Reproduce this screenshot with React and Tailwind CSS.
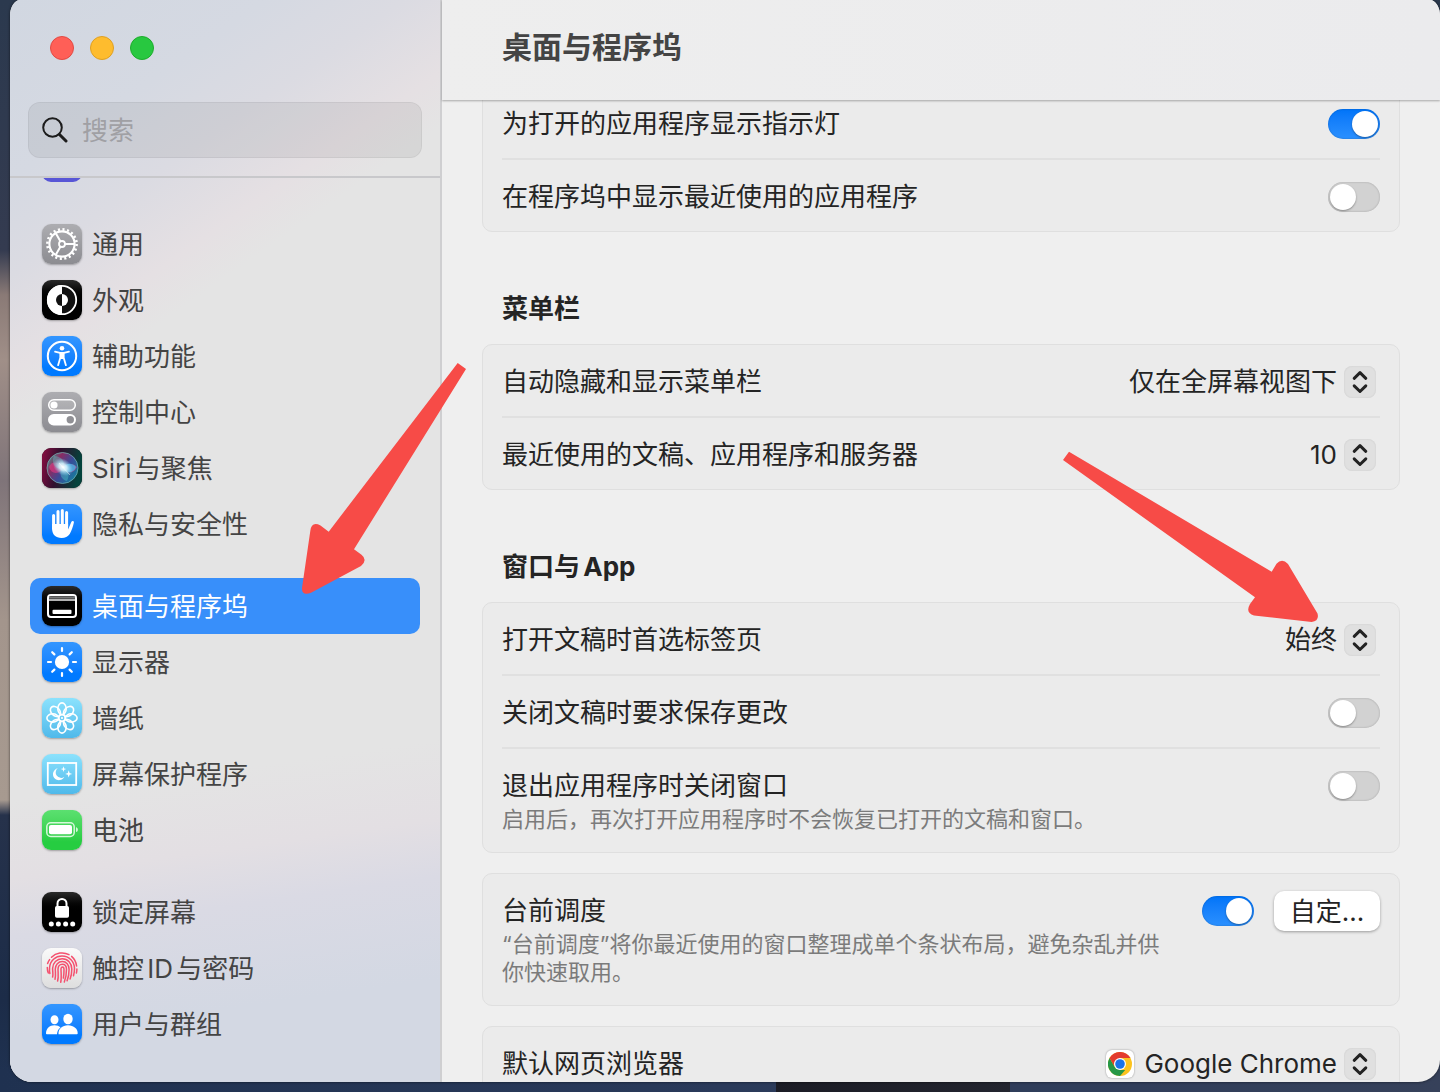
import React, { useState } from 'react';

const GearIcon = () => (
    <svg viewBox="0 0 40 40" className="h-10 w-10" fill="none" stroke="#fff">
        <circle cx="20" cy="20" r="14.6" strokeWidth="2.6" strokeDasharray="2.1 2.488" />
        <circle cx="20" cy="20" r="12.6" strokeWidth="2.1" />
        <circle cx="20" cy="20" r="3" strokeWidth="1.8" />
        <path d="M23 20h9.5M18.5 17.4 13.8 9.2M18.5 22.6l-4.7 8.2" strokeWidth="2" />
    </svg>
);

const AppearanceIcon = () => (
    <svg viewBox="0 0 40 40" className="h-10 w-10">
        <circle cx="20" cy="20" r="14.2" fill="#111" stroke="#fff" strokeWidth="1.8" />
        <path d="M20 5a15 15 0 0 0 0 30z" fill="#fff" />
        <path d="M20 14a6 6 0 0 0 0 12z" fill="#111" />
        <path d="M20 14a6 6 0 0 1 0 12z" fill="#fff" />
    </svg>
);

const AccessibilityIcon = () => (
    <svg viewBox="0 0 40 40" className="h-10 w-10" fill="none" stroke="#fff" strokeLinecap="round" strokeLinejoin="round">
        <circle cx="20" cy="20" r="14.2" strokeWidth="2" />
        <circle cx="20" cy="12.3" r="2.3" fill="#fff" stroke="none" />
        <path d="M13 15.6l5 1.2h4l5-1.2" strokeWidth="1.7" />
        <path d="M18.3 16.8h3.4v5l2.2 7.4M18.3 16.8v5l-2.2 7.4M19.5 17v5h1v-5" strokeWidth="1.8" />
    </svg>
);

const ControlIcon = () => (
    <svg viewBox="0 0 40 40" className="h-10 w-10">
        <rect x="6.7" y="7.7" width="26.6" height="10.6" rx="5.3" fill="#ffffff22" stroke="#fff" strokeWidth="1.5" />
        <circle cx="12" cy="13" r="3.6" fill="#fff" />
        <rect x="6" y="22" width="28" height="11.4" rx="5.7" fill="#fff" />
        <circle cx="28.3" cy="27.7" r="3.7" fill="#909095" />
    </svg>
);

const SiriIcon = () => (
    <svg viewBox="0 0 40 40" className="h-10 w-10">
        <defs>
            <linearGradient id="siriBg" x1="0" x2="1" y1="0" y2="0.2">
                <stop offset="0" stopColor="#8c0c42" />
                <stop offset="0.45" stopColor="#32102f" />
                <stop offset="1" stopColor="#04433c" />
            </linearGradient>
            <linearGradient id="siriOrb" x1="0" x2="1" y1="0.1" y2="0.8">
                <stop offset="0" stopColor="#3c9f91" />
                <stop offset="0.3" stopColor="#8a2b62" />
                <stop offset="0.6" stopColor="#394b98" />
                <stop offset="1" stopColor="#12829d" />
            </linearGradient>
            <radialGradient id="siriGlow">
                <stop offset="0" stopColor="#fff" />
                <stop offset="0.4" stopColor="#d9f7ff" stopOpacity="0.85" />
                <stop offset="1" stopColor="#7fd8f5" stopOpacity="0" />
            </radialGradient>
        </defs>
        <rect width="40" height="40" rx="9" fill="url(#siriBg)" />
        <circle cx="20.5" cy="20" r="15.5" fill="url(#siriOrb)" stroke="#76b6b7" strokeOpacity="0.7" />
        <path d="M7 19c3-8 11-4 14 0 4 6 10 8 14 0-5-5-10-3-14 2-5 6-12 5-14-2z" fill="#e33b83" fillOpacity="0.6" />
        <path d="M20 20c4-5 10-6 14-1-2 6-9 7-14 1z" fill="#42b7e8" fillOpacity="0.8" />
        <path d="M12 8c7 0 12 5 9 12 6 2 7 7 4 13-5-1-8-6-6-12-7-1-10-7-7-13z" fill="#56dfd0" fillOpacity="0.35" />
        <ellipse cx="21" cy="19" rx="11" ry="8" fill="url(#siriGlow)" transform="rotate(35 21 19)" />
        <path d="M17 15l11 12" stroke="#fff" strokeOpacity="0.5" />
    </svg>
);

const HandIcon = () => (
    <svg viewBox="0 0 40 40" className="h-10 w-10" fill="none" stroke="#fff" strokeLinecap="round">
        <path d="M11.6 11.6v13M16 7.6v14M20.3 6.6v14M24.6 8.6v14" strokeWidth="3" />
        <path d="M10.1 20h16v5.4l3.2-7.5c.6-1.4 3-1.2 2.6.7-1 4.3-2.4 8.4-4.2 11.4C25.8 32.9 23.2 34 19.6 34c-6 0-9.500-3.500-9.500-9.500z" fill="#fff" stroke="none" />
    </svg>
);

const DockIcon = () => (
    <svg viewBox="0 0 40 40" className="h-10 w-10">
        <rect x="6" y="9" width="28" height="22" rx="3" fill="none" stroke="#fff" strokeWidth="2" />
        <path d="M7 11.5h26" stroke="#777" strokeWidth="2.4" />
        <path d="M6 14h28" stroke="#fff" strokeWidth="1.4" />
        <rect x="10.5" y="23.7" width="19" height="4.3" rx="1" fill="#fff" />
    </svg>
);

const SunIcon = () => (
    <svg viewBox="0 0 40 40" className="h-10 w-10" stroke="#fff" strokeWidth="2.2" strokeLinecap="round">
        <circle cx="20" cy="20" r="7.1" fill="#fff" stroke="none" />
        <path d="M20 6v3M20 31v3M6 20h3M31 20h3M10.2 10.2l2.2 2.2M27.600 27.600l2.200 2.200M10.200 29.800l2.200-2.200M27.600 12.400l2.200-2.200" />
    </svg>
);

const FlowerIcon = () => (
    <svg viewBox="0 0 40 40" className="h-10 w-10" fill="none" stroke="#fff" strokeWidth="1.6">
        {[0, 45, 90, 135, 180, 225, 270, 315].map((a) => (
            <ellipse key={a} cx="20" cy="10.700" rx="4.200" ry="5.800" transform={`rotate(${a} 20 20)`} />
        ))}
        <circle cx="20" cy="20" r="3" strokeWidth="1.200" />
        <circle cx="20" cy="20" r="1.100" fill="#fff" stroke="none" />
    </svg>
);

const SaverIcon = () => (
    <svg viewBox="0 0 40 40" className="h-10 w-10" fill="#fff">
        <rect x="5.800" y="9" width="28.400" height="22" fill="none" stroke="#fff" strokeWidth="1.800" />
        <path d="M15.700 14.300a6 6 0 1 0 6.700 8.400 5.200 5.200 0 0 1-6.700-8.400z" />
        <path d="M21.500 12.300l.7 2.100 2.100.7-2.100.7-.7 2.100-.7-2.100-2.100-.7 2.100-.7zM26.700 16.200l.9 2.800 2.600.9-2.600.9-.9 2.800-.9-2.800-2.600-.9 2.600-.9z" />
    </svg>
);

const BatteryIcon = () => (
    <svg viewBox="0 0 40 40" className="h-10 w-10">
        <rect x="4.800" y="12.800" width="27.400" height="13.600" rx="4" fill="none" stroke="#d5f8da" strokeWidth="1.500" />
        <rect x="7" y="15" width="23" height="9.200" rx="2" fill="#fff" />
        <path d="M34 17.200c2.500.6 2.500 4.200 0 4.800z" fill="#d5f8da" />
    </svg>
);

const LockIcon = () => (
    <svg viewBox="0 0 40 40" className="h-10 w-10" fill="#fff">
        <path d="M15.500 15v-3.600a4.500 4.500 0 0 1 9 0V15" fill="none" stroke="#fff" strokeWidth="2" />
        <rect x="13" y="14" width="14" height="11.800" rx="1.800" />
        <circle cx="9.300" cy="32" r="2.500" />
        <circle cx="16.400" cy="32" r="2.500" />
        <circle cx="23.600" cy="32" r="2.500" />
        <circle cx="30.700" cy="32" r="2.500" />
    </svg>
);

const TouchIcon = () => (
    <svg viewBox="0 0 40 40" className="h-10 w-10" fill="none" stroke="#f4506e" strokeWidth="1.500" strokeLinecap="round">
        <path d="M9.500 9.300a15 15 0 0 1 17.500-2.700M29.600 8.400a15 15 0 0 1 5 9.600M5.600 15.500a15 15 0 0 1 2-3.900" />
        <path d="M5.300 19.500c0 2.200.4 4 1 5.500M7.900 25.500c-.6-2-.5-3.500-.3-6C8 12.800 13.500 8 20 8c7.300 0 12.500 5.700 12.500 12.500 0 2.500-.3 5-1 7.300M34.900 21c0 1.500-.2 2.800-.5 4" />
        <path d="M10.600 29c.8-2.500 0-5 0-8.500 0-5.600 4.300-9.800 9.600-9.800 5.600 0 9.600 4.500 9.600 10.300 0 3.900-.5 7-1.700 10" />
        <path d="M13 31.300c1-3.300.3-7 .3-10.300 0-4.300 3-7.500 7-7.500s6.800 3.300 6.800 7.700c0 4.300-.6 8-2 11.600" />
        <path d="M15.600 33c1.200-4 .4-8 .4-11.800 0-2.900 1.800-5 4.300-5s4.200 2.100 4.200 5c0 4.600-.6 8.700-2.200 12.800" />
        <path d="M18.700 34.300c.8-3 .6-7.300.3-12.600-.1-1.600.4-2.700 1.500-2.700s1.500 1.100 1.500 2.600c0 3.400-.1 5.800-.6 8.500" />
    </svg>
);

const UsersIcon = () => (
    <svg viewBox="0 0 40 40" className="h-10 w-10" fill="#fff">
        <ellipse cx="12.500" cy="15.700" rx="4" ry="4.500" />
        <path d="M4 29.500c0-4.800 3.500-8.200 8.500-8.200 2.400 0 4.500.8 6 2.100-2.200 1.500-3.300 3.800-3.500 6.900H4.800c-.5 0-.8-.3-.8-.8z" />
        <ellipse cx="26" cy="15" rx="4.700" ry="5.200" />
        <path d="M16.500 30.300c-.4-5.400 3.800-9 9.500-9s10 3.600 9.700 8.200c0 .5-.3.800-.8.800z" />
    </svg>
);

const ChromeIcon = () => (
    <svg viewBox="0 0 24 24" className="h-6 w-6">
        <circle cx="12" cy="12" r="12" fill="#fcc31e" />
        <path d="M1.600 6 6.800 15 12 18h5.200L12 24A12 12 0 0 1 1.600 6z" fill="#279847" />
        <path d="M1.600 6 6.800 15 6 11 12 6h10.400A12 12 0 0 0 1.600 6z" fill="#e33b2e" />
        <circle cx="12" cy="12" r="6" fill="#fff" />
        <circle cx="12" cy="12" r="4.800" fill="#1a73e8" />
    </svg>
);

const gray = 'bg-linear-to-b from-[#adadb1] to-[#8c8c91]';
const black = 'bg-linear-to-b from-[#2b2b2b] to-black to-50%';
const blue = 'bg-linear-to-b from-[#3396ff] to-[#007aff] to-80%';
const cyan = 'bg-linear-to-b from-[#8be2fd] to-[#4fb9ea]';

const groups = [
    [
        { name: '通用', color: gray, icon: <GearIcon /> },
        { name: '外观', color: black, icon: <AppearanceIcon /> },
        { name: '辅助功能', color: blue, icon: <AccessibilityIcon /> },
        { name: '控制中心', color: gray, icon: <ControlIcon /> },
        { name: 'Siri与聚焦', color: black, icon: <SiriIcon /> },
        { name: '隐私与安全性', color: blue, icon: <HandIcon /> },
    ],
    [
        { name: '桌面与程序坞', color: black, icon: <DockIcon /> },
        { name: '显示器', color: blue, icon: <SunIcon /> },
        { name: '墙纸', color: cyan, icon: <FlowerIcon /> },
        { name: '屏幕保护程序', color: cyan, icon: <SaverIcon /> },
        { name: '电池', color: 'bg-linear-to-b from-[#5be070] to-[#26cd41] to-80%', icon: <BatteryIcon /> },
    ],
    [
        { name: '锁定屏幕', color: black, icon: <LockIcon /> },
        { name: '触控ID与密码', color: 'bg-linear-to-b from-[#fafafa] to-[#dedede]', icon: <TouchIcon /> },
        { name: '用户与群组', color: blue, icon: <UsersIcon /> },
    ],
];

const Toggle = ({ id, defaultChecked }) => (
    <input
        id={id}
        type="checkbox"
        defaultChecked={defaultChecked}
        className="h-[30px] w-[52px] shrink-0 appearance-none rounded-full bg-[#d2d2d2] p-0.5 shadow-[inset_0_0_2px_rgba(0,0,0,0.25)] before:block before:h-[26px] before:w-[26px] before:rounded-full before:bg-white before:shadow-[0_1px_2px_rgba(0,0,0,0.35)] checked:bg-linear-to-b checked:from-[#0074f8] checked:to-[#2a90ff] checked:before:ml-[22px]"
    />
);

const Select = ({ id, options, icon }) => (
    <div className="relative flex items-center gap-2.5">
        {icon}
        <select
            id={id}
            className="h-8 appearance-none bg-transparent pr-[43px] text-right leading-8 outline-none [field-sizing:content]"
        >
            {options.map((o) => (
                <option key={o}>{o}</option>
            ))}
        </select>
        <span className="pointer-events-none absolute right-1 flex h-8 w-8 items-center justify-center rounded-lg bg-[#e0e0e0] shadow-[inset_0_0_2px_rgba(0,0,0,0.1)]">
            <svg viewBox="0 0 32 32" className="h-8 w-8" fill="none" stroke="#222" strokeWidth="3" strokeLinecap="round" strokeLinejoin="round">
                <path d="M10.200 12.300 16 6.700l5.800 5.600M10.200 19.900 16 25.500l5.800-5.600" />
            </svg>
        </span>
    </div>
);

const Row = ({ id, label, note, children }) => (
    <div className={`flex items-start justify-between gap-6 pt-[21px] ${note ? 'pb-[19px]' : 'pb-[18px]'}`}>
        <div>
            <label htmlFor={id} className="block leading-8">{label}</label>
            {note && <p className="mt-[3px] text-[22px] leading-7 text-[#7b7b7b]">{note}</p>}
        </div>
        <div className="flex h-8 shrink-0 items-center gap-5">{children}</div>
    </div>
);

const Card = ({ children }) => (
    <section className="divide-y-2 divide-[#e0e0e0] rounded-[10px] border border-[#dfdfdf] bg-[#ebebeb] px-[19px]">
        {children}
    </section>
);

const Heading = ({ children }) => (
    <h2 className="mt-[61px] mb-[19px] pl-5 font-bold leading-8">{children}</h2>
);

const Sidebar = () => {
    const [active, setActive] = useState('桌面与程序坞');

    return (
        <aside className="flex w-[432px] shrink-0 flex-col border-r-2 border-[#cfcfd1] bg-[linear-gradient(172deg,transparent_70%,#e3dfe3_77%,#dadae4_82%,#d3d8e3_91%),linear-gradient(145deg,#d1d7e1_0%,#d5d9e2_13%,#dbdbe2_20%,#e5e0e3_27%,#e4e4e4_31%)]">
            <div className="border-b-2 border-[#c8c8cb] px-[18px] pt-9 pb-[18px]">
                <div className="flex gap-4 pl-[22px]">
                    <button type="button" aria-label="关闭" className="h-6 w-6 rounded-full border border-[#e24a43] bg-[#ff5f57]" />
                    <button type="button" aria-label="最小化" className="h-6 w-6 rounded-full border border-[#dfa023] bg-[#febc2e]" />
                    <button type="button" aria-label="缩放" className="h-6 w-6 rounded-full border border-[#1dad2b] bg-[#28c840]" />
                </div>
                <div className="mt-[42px] flex h-14 items-center gap-3.5 rounded-xl border border-black/5 bg-black/6 pl-[13px]">
                    <svg viewBox="0 0 26 26" className="h-[26px] w-[26px] shrink-0" fill="none" stroke="#1c1c1c" strokeLinecap="round">
                        <circle cx="10.500" cy="10.500" r="9.300" strokeWidth="2" />
                        <path d="M17.500 17.500l6.500 6.500" strokeWidth="3" />
                    </svg>
                    <input
                        type="search"
                        aria-label="搜索"
                        placeholder="搜索"
                        className="w-full min-w-0 bg-transparent outline-none placeholder:text-[#a0a0a4]"
                    />
                </div>
            </div>
            <nav className="min-h-0 flex-1 overflow-hidden px-5">
                <div className="flex h-3 items-end overflow-hidden pb-2 pl-3">
                    <span className="h-10 w-10 shrink-0 rounded-[9px] bg-[#5856d6]" />
                </div>
                {groups.map((items, i) => (
                    <ul key={i} className="mt-[26px]">
                        {items.map((item) => (
                            <li key={item.name}>
                                <button
                                    type="button"
                                    onClick={() => setActive(item.name)}
                                    className={`flex h-14 w-full items-center gap-2.5 rounded-[10px] pl-3 ${
                                        active === item.name ? 'bg-[#388ffa] text-white' : 'text-[#444]'
                                    }`}
                                >
                                    <span className={`flex h-10 w-10 items-center justify-center rounded-[9px] shadow-[0_1px_2px_rgba(0,0,0,0.3)] ${item.color}`}>
                                        {item.icon}
                                    </span>
                                    {item.name}
                                </button>
                            </li>
                        ))}
                    </ul>
                ))}
            </nav>
        </aside>
    );
};

const App = () => {
    return (
        <div className="relative h-screen overflow-hidden bg-[linear-gradient(90deg,transparent_776px,#1b1c25_776px,#23252f_1010px,transparent_1010px),linear-gradient(180deg,#2b394e_0px,#343b50_250px,#8a7a76_295px,#a08f88_360px,#7f7479_480px,#a3958c_620px,#a79a90_800px,#26324b_815px,#1c2c48_1000px,transparent_1070px),linear-gradient(90deg,#1f3150,#2a3a5a_50%,#36415a)] pb-2.5 pl-2.5 text-[26px] text-[#242424] [font-family:Inter,'Noto_Sans_CJK_SC',sans-serif] [text-autospace:normal]">
            <div className="flex h-full overflow-hidden rounded-tl-[10px_16px] rounded-tr-[10px_16px] rounded-br-[22px] rounded-bl-[22px] bg-[#efefef] shadow-[0_0_3px_rgba(0,0,0,0.6)]">
                <Sidebar />
                <main className="flex min-w-0 flex-1 flex-col">
                    <header className="z-10 flex h-[100px] shrink-0 items-center bg-linear-to-r from-[#eeeeee] to-[#ebebed] px-[60px] pb-1.5 shadow-[0_1px_2px_rgba(0,0,0,0.3)]">
                        <h1 className="text-[30px] font-bold leading-10 text-[#444]">桌面与程序坞</h1>
                    </header>
                    <div className="min-h-0 flex-1 overflow-hidden px-10">
                        <div className="-mt-3.5">
                            <Card>
                                <Row id="indicator" label="为打开的应用程序显示指示灯">
                                    <Toggle id="indicator" defaultChecked />
                                </Row>
                                <Row id="recent" label="在程序坞中显示最近使用的应用程序">
                                    <Toggle id="recent" />
                                </Row>
                            </Card>

                            <Heading>菜单栏</Heading>
                            <Card>
                                <Row id="menubar" label="自动隐藏和显示菜单栏">
                                    <Select id="menubar" options={['仅在全屏幕视图下', '始终', '永不']} />
                                </Row>
                                <Row id="count" label="最近使用的文稿、应用程序和服务器">
                                    <Select id="count" options={['10', '15', '20']} />
                                </Row>
                            </Card>

                            <Heading>窗口与App</Heading>
                            <div className="flex flex-col gap-5">
                                <Card>
                                    <Row id="tabs" label="打开文稿时首选标签页">
                                        <Select id="tabs" options={['始终', '永不']} />
                                    </Row>
                                    <Row id="save" label="关闭文稿时要求保存更改">
                                        <Toggle id="save" />
                                    </Row>
                                    <Row id="quit" label="退出应用程序时关闭窗口" note="启用后，再次打开应用程序时不会恢复已打开的文稿和窗口。">
                                        <Toggle id="quit" />
                                    </Row>
                                </Card>
                                <Card>
                                    <Row id="stage" label="台前调度" note="“台前调度”将你最近使用的窗口整理成单个条状布局，避免杂乱并供你快速取用。">
                                        <Toggle id="stage" defaultChecked />
                                        <button
                                            type="button"
                                            className="h-10 w-[106px] rounded-[10px] bg-white shadow-[0_1px_3px_rgba(0,0,0,0.35)]"
                                        >
                                            自定...
                                        </button>
                                    </Row>
                                </Card>
                                <Card>
                                    <Row id="browser" label="默认网页浏览器">
                                        <Select
                                            id="browser"
                                            options={['Google Chrome', 'Safari']}
                                            icon={
                                                <span className="flex h-7 w-7 items-center justify-center rounded-md bg-white shadow-[0_0_2px_rgba(0,0,0,0.4)]">
                                                    <ChromeIcon />
                                                </span>
                                            }
                                        />
                                    </Row>
                                </Card>
                            </div>
                        </div>
                    </div>
                </main>
            </div>

            <svg viewBox="300 360 170 240" className="pointer-events-none absolute top-[360px] left-[300px] z-20 h-[240px] w-[170px]" fill="#f74b47">
                <path d="M457.700 363 466 369 354 549.300 361.500 554.800Q368 560 361 566L311 592.800Q301.500 596 302 588L310.300 531Q311.500 521 320.500 525.500L328.700 531.700z" />
            </svg>
            <svg viewBox="1060 448 260 178" className="pointer-events-none absolute top-[448px] right-[120px] z-20 h-[178px] w-[260px]" fill="#f74b47">
                <path d="M1069 451.700 1063 460 1255 597.300 1250 604Q1245 613 1254 615.500L1311.700 622Q1319.500 621 1317.500 613.500L1288 564Q1282 557.500 1276.500 563.800L1271.700 571.700z" />
            </svg>
        </div>
    );
};

export default App;
